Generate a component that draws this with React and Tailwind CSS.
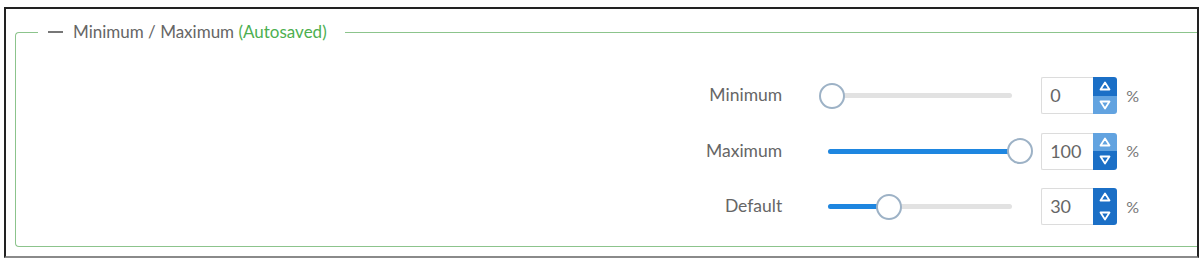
import React from 'react';

const rows = [
  { label: 'Minimum', value: 0, upOn: true, downOn: false },
  { label: 'Maximum', value: 100, upOn: false, downOn: true },
  { label: 'Default', value: 30, upOn: true, downOn: true },
];

function Arrow({ up }) {
  return (
    <svg width="12" height="10" viewBox="0 0 12 10">
      <path
        d={up ? 'M6 1.5 L10.5 8.5 L1.5 8.5 Z' : 'M6 8.5 L10.5 1.5 L1.5 1.5 Z'}
        fill="none"
        stroke="white"
        strokeWidth="1.8"
        strokeLinejoin="round"
      />
    </svg>
  );
}

function Slider({ value }) {
  // thumb travels 188px inside a 214px box
  const left = (value / 100) * 188;
  return (
    <div className="relative w-[214px] h-[30px] flex items-center">
      <div className="absolute left-[9px] right-[21px] h-[5px] rounded-full bg-[#e2e2e2]" />
      <div
        className="absolute left-[9px] h-[5px] rounded-full bg-[#1e86e0]"
        style={{ width: Math.max(0, left + 4) }}
      />
      <div
        className="absolute top-[2px] w-[26px] h-[26px] rounded-full bg-white border-2 border-[#9db2c6]"
        style={{ left }}
      />
    </div>
  );
}

function NumberBox({ value, upOn, downOn }) {
  return (
    <div className="flex h-[37px] ml-[8px]">
      <div className="w-[52px] h-full flex items-center pl-[8px] border border-[#dcdcdc] border-r-0 rounded-l-[2px] text-[18px] text-[#666]">
        {value}
      </div>
      <div className="w-[24px] h-full flex flex-col rounded-r-[3px] overflow-hidden">
        <div className={`flex-1 flex items-center justify-center ${upOn ? 'bg-[#1b6fc6]' : 'bg-[#62a3e0]'}`}>
          <Arrow up />
        </div>
        <div className={`flex-1 flex items-center justify-center ${downOn ? 'bg-[#1b6fc6]' : 'bg-[#62a3e0]'}`}>
          <Arrow />
        </div>
      </div>
      <span className="self-center ml-[9px] text-[16px] text-[#777]">%</span>
    </div>
  );
}

export default function App() {
  return (
    <div className="bg-white w-[1204px] h-[262px] pt-[7px] pl-[4px] font-['Lato','Open_Sans',sans-serif]">
      <div className="w-[1195px] h-[251px] border-2 border-[#222] border-b-[#8a8a8a] pt-[11px] pl-[9px]">
        <fieldset className="border border-[#8cc48c] border-r-0 rounded-l-[4px] h-[227px] pt-[33px] pr-[58px] flex flex-col items-end gap-[18.5px]">
          <legend className="ml-[22px] pl-[10px] pr-[18px] h-[24px] flex items-center text-[17px] text-[#666]">
            <span className="inline-block w-[15px] h-[2px] bg-[#777] mr-[10px]" />
            Minimum / Maximum&nbsp;<span className="text-[#4caf50]">(Autosaved)</span>
          </legend>
          {rows.map((r) => (
            <div key={r.label} className="flex items-center h-[37px]">
              <div className="w-[120px] text-right pr-[37px] text-[17.5px] text-[#666]">{r.label}</div>
              <Slider value={r.value} />
              <NumberBox value={r.value} upOn={r.upOn} downOn={r.downOn} />
            </div>
          ))}
        </fieldset>
      </div>
    </div>
  );
}
